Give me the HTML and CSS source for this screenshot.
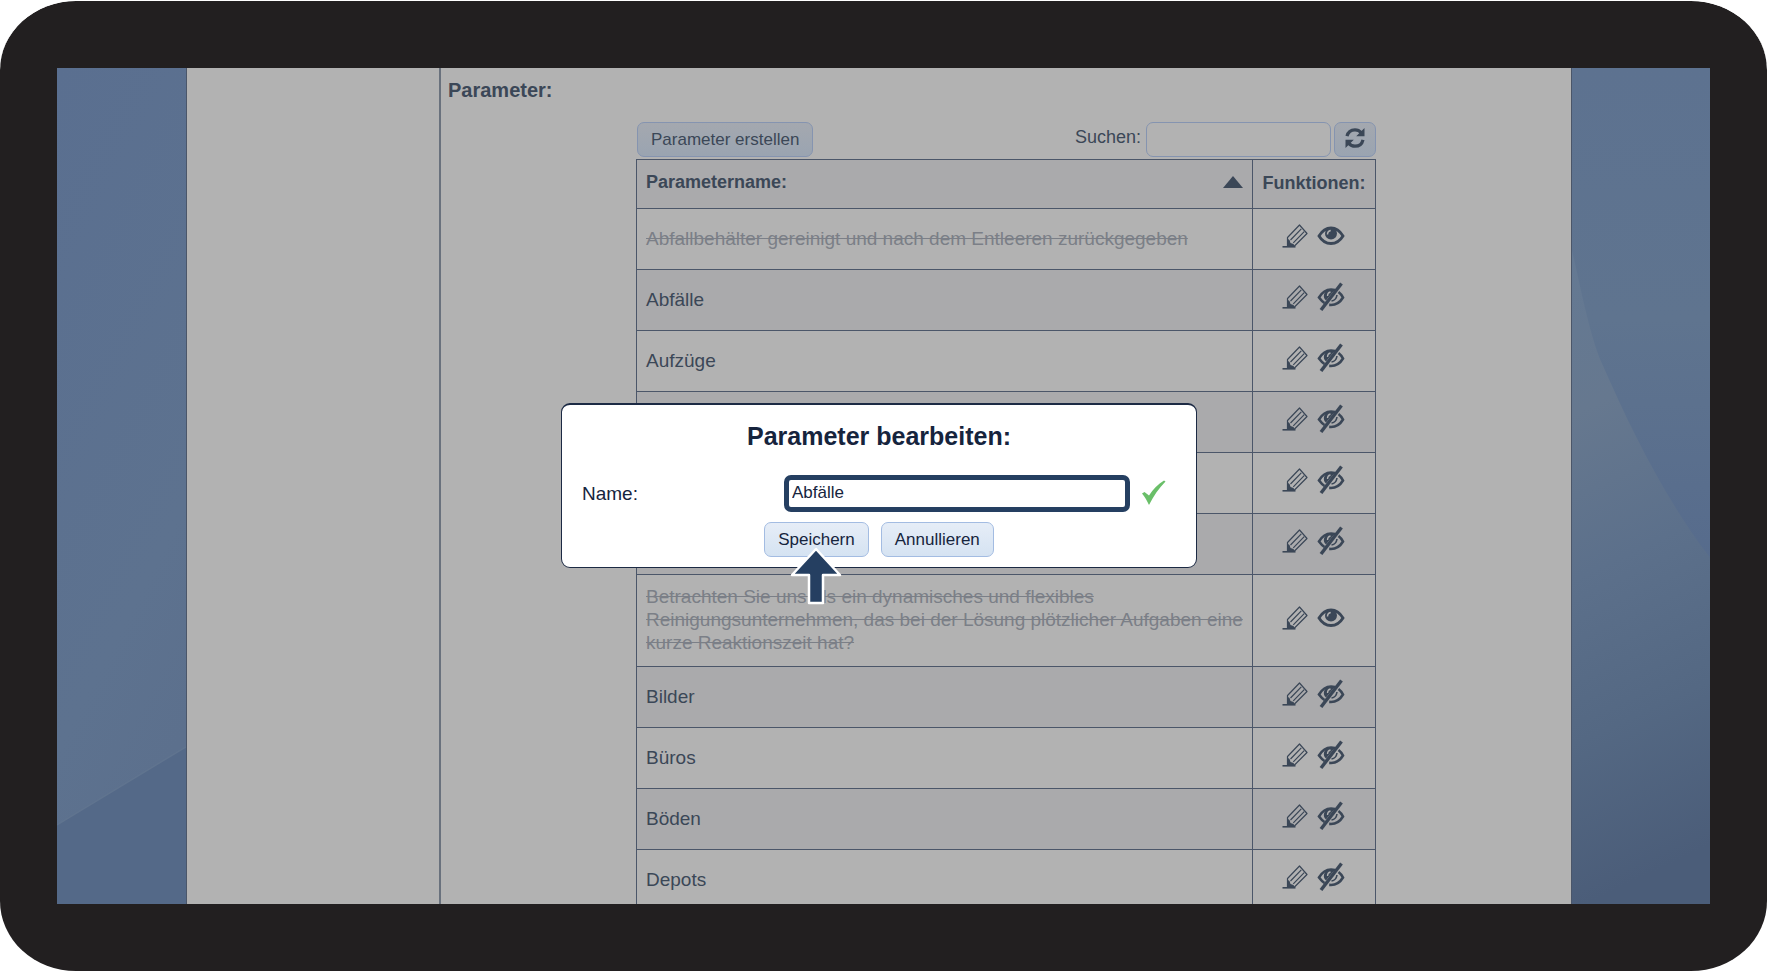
FILE: index.html
```html
<!doctype html>
<html lang="de">
  <head>
    <meta charset="UTF-8" />
    <meta name="viewport" content="width=device-width, initial-scale=1.0" />
    <title>Parameter</title>
    <link rel="stylesheet" href="styles.css">
  </head>

  <body>
    <!-- shared icons -->
    <svg class="sprite" aria-hidden="true">
      <symbol id="pencil" viewBox="0 0 26 24">
        <path d="M0.500 22.800h13" fill="none" stroke="currentColor" stroke-width="1.600" />
        <path d="M5.500 13.500 17.500 1 25 9.500 13 21.500l-7.500 1z" fill="none" stroke="currentColor" stroke-width="1.200" stroke-linejoin="round" />
        <path d="M5.200 14.500l2.300 1.500 1 3 3 1 1.500 2.800H5.200z" fill="currentColor" />
        <path d="M8.500 16 19.300 4.800M11.300 18.800 22.200 7.600" fill="none" stroke="currentColor" stroke-width="1.200" />
      </symbol>
      <symbol id="eye" viewBox="0 0 28 28">
        <path d="M2 14C5 9 9 6 14 6s9 3 12 8c-3 5-7 7.500-12 7.500S5 19 2 14z" fill="none" stroke="currentColor" stroke-width="2.800" />
        <circle cx="14" cy="11.500" r="6" fill="currentColor" />
        <path d="M10.500 12.500c0-2.200 1-3.600 3.200-4" fill="none" stroke="#b2b2b2" stroke-width="1.500" />
      </symbol>
      <symbol id="eye-off" viewBox="0 0 28 30">
        <path d="M7.500 21C5 19.500 3.500 17.500 2 15.500 5 10.500 9 7.500 14 7.500l4 .6M21.500 10c2 1.500 3.500 3.500 4.500 5.500-3 5-7 7.500-12 7.500l-1.800-.1" fill="none" stroke="currentColor" stroke-width="2.600" />
        <path d="M9 18.500a6 6 0 0 1 2-10.300l6.500-.2z" fill="currentColor" />
        <path d="M14.500 19c3-.5 5-2.500 5.500-6" fill="none" stroke="currentColor" stroke-width="1.600" />
        <path d="M10.500 14c0-2.200 1-3.600 3-4" fill="none" stroke="#b2b2b2" stroke-width="1.300" />
        <path d="M4 28 24.500 1.500" fill="none" stroke="currentColor" stroke-width="3.400" />
      </symbol>
    </svg>

    <div class="device">
      <div class="screen">
        <svg class="side" viewBox="0 0 129 835" preserveAspectRatio="none" aria-hidden="true">
          <defs>
            <linearGradient id="leftSky" x1="0" y1="0" x2="0.3" y2="1">
              <stop offset="0" stop-color="#5a6f90" />
              <stop offset="0.75" stop-color="#5d728f" />
              <stop offset="1" stop-color="#5c708d" />
            </linearGradient>
          </defs>
          <rect width="129" height="835" fill="url(#leftSky)" />
          <path d="M0 756 129 678V835H0z" fill="#546988" />
          <path d="M0 756 129 678" stroke="#60748f" stroke-width="1.500" />
        </svg>

        <div class="page">
          <nav class="sidebar"></nav>

          <main class="content">
            <h2>Parameter:</h2>
            <div class="list">
              <div class="toolbar">
                <button type="button" class="btn dim">Parameter erstellen</button>
                <div class="search">
                  <label for="search">Suchen:</label>
                  <input type="text" id="search" />
                  <button type="button" class="btn dim refresh" aria-label="Aktualisieren">
                    <svg viewBox="0 0 22 22" width="22" height="22">
                      <path d="M3 9.200C4 5 7 2.800 11 2.800c2.600 0 4.600 1 6.200 2.800M19 12.800c-1 4.200-4 6.400-8 6.400-2.600 0-4.600-1-6.200-2.800" fill="none" stroke="currentColor" stroke-width="3.200" />
                      <path d="M20.500 1v8.300h-8.300zM1.500 21v-8.300h8.300z" fill="currentColor" />
                    </svg>
                  </button>
                </div>
              </div>

              <table>
                <thead>
                  <tr>
                    <th class="name">
                      <div class="sort">
                        Parametername:
                        <svg viewBox="0 0 20 12" width="20" height="12"><path d="M0 12 10 0l10 12z" fill="currentColor" /></svg>
                      </div>
                    </th>
                    <th class="tools">Funktionen:</th>
                  </tr>
                </thead>
                <tbody>
                  <tr class="off">
                    <td>Abfallbehälter gereinigt und nach dem Entleeren zurückgegeben</td>
                    <td class="icons"><svg class="pencil"><use href="#pencil" /></svg><svg class="eye"><use href="#eye" /></svg></td>
                  </tr>
                  <tr>
                    <td>Abfälle</td>
                    <td class="icons"><svg class="pencil"><use href="#pencil" /></svg><svg class="eye"><use href="#eye-off" /></svg></td>
                  </tr>
                  <tr>
                    <td>Aufzüge</td>
                    <td class="icons"><svg class="pencil"><use href="#pencil" /></svg><svg class="eye"><use href="#eye-off" /></svg></td>
                  </tr>
                  <tr>
                    <td></td>
                    <td class="icons"><svg class="pencil"><use href="#pencil" /></svg><svg class="eye"><use href="#eye-off" /></svg></td>
                  </tr>
                  <tr>
                    <td></td>
                    <td class="icons"><svg class="pencil"><use href="#pencil" /></svg><svg class="eye"><use href="#eye-off" /></svg></td>
                  </tr>
                  <tr>
                    <td></td>
                    <td class="icons"><svg class="pencil"><use href="#pencil" /></svg><svg class="eye"><use href="#eye-off" /></svg></td>
                  </tr>
                  <tr class="off">
                    <td>Betrachten Sie uns als ein dynamisches und flexibles Reinigungsunternehmen, das bei der Lösung plötzlicher Aufgaben eine kurze Reaktionszeit hat?</td>
                    <td class="icons"><svg class="pencil"><use href="#pencil" /></svg><svg class="eye"><use href="#eye" /></svg></td>
                  </tr>
                  <tr>
                    <td>Bilder</td>
                    <td class="icons"><svg class="pencil"><use href="#pencil" /></svg><svg class="eye"><use href="#eye-off" /></svg></td>
                  </tr>
                  <tr>
                    <td>Büros</td>
                    <td class="icons"><svg class="pencil"><use href="#pencil" /></svg><svg class="eye"><use href="#eye-off" /></svg></td>
                  </tr>
                  <tr>
                    <td>Böden</td>
                    <td class="icons"><svg class="pencil"><use href="#pencil" /></svg><svg class="eye"><use href="#eye-off" /></svg></td>
                  </tr>
                  <tr>
                    <td>Depots</td>
                    <td class="icons"><svg class="pencil"><use href="#pencil" /></svg><svg class="eye"><use href="#eye-off" /></svg></td>
                  </tr>
                </tbody>
              </table>
            </div>
          </main>

          <div class="overlay">
            <form class="modal" role="dialog" aria-labelledby="modalTitle">
              <h1 id="modalTitle">Parameter bearbeiten:</h1>
              <div class="field">
                <label for="paramName">Name:</label>
                <input type="text" id="paramName" value="Abfälle" />
                <svg viewBox="0 0 24 26" width="24" height="26" aria-hidden="true">
                  <path d="M0 13.500 2.500 12l4.500 3.500C11 9.500 16 4 22 0.500l1.500 1C17 8 11.500 16 7 25 5 21 3 17 0 13.500z" fill="#6abf69" />
                </svg>
              </div>
              <div class="actions">
                <div class="target">
                  <button type="button" class="btn">Speichern</button>
                  <svg class="pointer" viewBox="0 0 52 58" width="52" height="58" aria-hidden="true">
                    <path d="M26 2 50 28H33V56H19V28H2z" fill="#253f61" stroke="#fff" stroke-width="2.500" stroke-linejoin="round" />
                  </svg>
                </div>
                <button type="button" class="btn">Annullieren</button>
              </div>
            </form>
          </div>
        </div>

        <svg class="side" viewBox="0 0 139 835" preserveAspectRatio="none" aria-hidden="true">
          <defs>
            <linearGradient id="rightSky" x1="0" y1="0" x2="0" y2="1">
              <stop offset="0" stop-color="#5d7290" />
              <stop offset="0.3" stop-color="#5f748f" />
              <stop offset="0.6" stop-color="#566b8c" />
            </linearGradient>
            <linearGradient id="rightHill" x1="0" y1="0" x2="0.1" y2="1">
              <stop offset="0" stop-color="#647993" />
              <stop offset="0.25" stop-color="#66788f" />
              <stop offset="0.5" stop-color="#5c708b" />
              <stop offset="0.75" stop-color="#546883" />
              <stop offset="1" stop-color="#4b5d79" />
            </linearGradient>
          </defs>
          <rect width="139" height="835" fill="url(#rightSky)" />
          <path d="M0 182C10 225 18 268 31 297 58 358 92 428 139 489V835H0z" fill="url(#rightHill)" />
        </svg>
      </div>
    </div>
  </body>
</html>
```

FILE: styles.css
```css
* {
  box-sizing: border-box;
}

body {
  margin: 0;
  background: #fff;
  color: #3b4757;
  font-family: "Liberation Sans", Arial, sans-serif;
  font-size: 19px;
  line-height: 23px;
}

h1,
h2 {
  margin: 0;
}

input,
button {
  font: inherit;
  color: inherit;
}

.sprite {
  display: none;
}

/* Device frame */
.device {
  height: 100vh;
  padding: 67px 57px;
  border-top: 1px solid #fff;
  border-radius: 76px / 70px;
  background: #221f20;
  background-clip: padding-box;
}

.screen {
  display: grid;
  grid-template-columns: 129px 1fr 138px;
  height: 100%;
  overflow: hidden;
}

.side {
  display: block;
  width: 100%;
  height: 100%;
  min-height: 0;
}

.page {
  position: relative;
  display: flex;
  min-height: 0;
  overflow: hidden;
  border-left: 1px solid #4b5669;
  border-right: 1px solid #4b5669;
  background: #b2b2b2;
}

.sidebar {
  width: 254px;
  flex-shrink: 0;
  border-right: 2px solid #69717d;
}

.content {
  flex: 1;
}

.content h2 {
  padding: 10px 7px 8px;
  font-size: 20px;
  line-height: 24px;
}

/* Parameter list */
.list {
  width: 740px;
  max-width: 100%;
  margin: 12px auto 0;
}

.toolbar {
  display: flex;
  justify-content: space-between;
  padding: 0 0 2px 1px;
}

.btn {
  height: 35px;
  padding: 0 13px;
  border: 1px solid #a3bce2;
  border-radius: 7px;
  background: linear-gradient(#e6edf7, #d5e3f2);
  font-size: 17px;
}

.btn.dim {
  border-color: #8594b0;
  background: linear-gradient(#a4a8af, #9aa4b1);
}

.search {
  display: flex;
  align-items: center;
}

.search label {
  padding: 0 5px 5px 0;
  font-size: 18px;
}

.search input {
  width: 185px;
  height: 35px;
  margin-right: 3px;
  border: 1px solid #8594b0;
  border-radius: 7px;
  background: #b2b2b2;
}

.btn.refresh {
  width: 42px;
  padding: 0 9px 4px;
}

.refresh svg {
  display: block;
}

table {
  width: 100%;
  border-collapse: collapse;
  table-layout: fixed;
}

th,
td {
  height: 61px;
  padding: 0 9px 2px;
  border: 1px solid #4b5669;
  text-align: left;
}

th {
  height: 49px;
  background: #aaaaac;
  font-size: 18px;
}

th.name {
  padding-bottom: 4px;
}

th.tools {
  width: 123px;
  padding: 0 0 2px;
  text-align: center;
}

.sort {
  display: flex;
  justify-content: space-between;
  align-items: center;
}

tbody tr:nth-child(even) {
  background: #aaaaac;
}

.off td:first-child {
  padding: 10px 9px 12px;
  color: #7b7f87;
  text-decoration: line-through;
}

.icons {
  padding: 0 2px 6px 0;
  text-align: center;
  white-space: nowrap;
}

.icons svg {
  width: 26px;
  vertical-align: middle;
}

.icons .pencil {
  height: 24px;
  margin-right: 9px;
}

.icons .eye {
  width: 28px;
  height: 30px;
}

/* Edit dialog */
.overlay {
  position: absolute;
  inset: 0;
  display: flex;
  justify-content: center;
  align-items: center;
  padding-bottom: 2px;
}

.modal {
  width: 636px;
  max-width: 100%;
  padding: 16px 20px 10px;
  border: 1px solid #1c2a44;
  border-top-width: 2px;
  border-radius: 9px;
  background: #fff;
  color: #16243d;
}

.modal h1 {
  font-size: 25px;
  line-height: 30px;
  text-align: center;
}

.field {
  display: flex;
  align-items: center;
  padding: 24px 0 10px;
}

.field label {
  width: 202px;
}

.field input {
  width: 346px;
  height: 37px;
  margin-right: 12px;
  padding: 0 3px;
  border: 5px solid #253f61;
  border-radius: 7px;
  background: #fff;
  font-size: 17px;
  outline: none;
}

.actions {
  display: flex;
  justify-content: center;
  gap: 12px;
}

.target {
  position: relative;
}

/* Arrow lies over the save button */
.pointer {
  position: absolute;
  top: 25px;
  left: 50%;
  margin-left: -26px;
}
```
